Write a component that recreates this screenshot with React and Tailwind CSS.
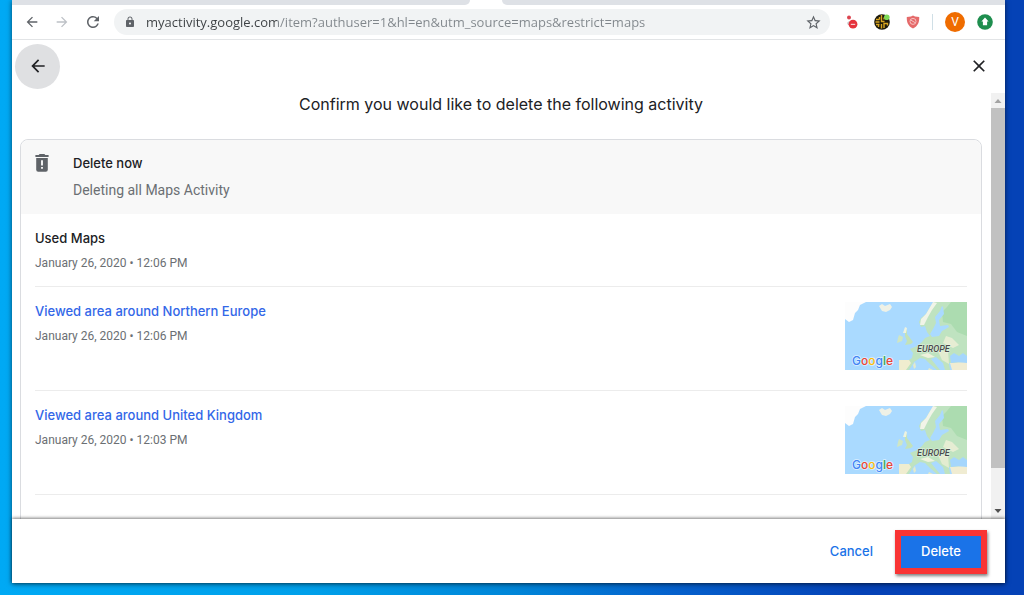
import React from 'react';
import { MdArrowBack, MdArrowForward, MdRefresh, MdLock, MdStarBorder, MdClose } from 'react-icons/md';

const activities = [
  { id: 1, title: 'Used Maps', time: 'January 26, 2020 • 12:06 PM' },
  { id: 2, title: 'Viewed area around Northern Europe', time: 'January 26, 2020 • 12:06 PM', map: true },
  { id: 3, title: 'Viewed area around United Kingdom', time: 'January 26, 2020 • 12:03 PM', map: true },
];

function BlockedDotIcon() {
  return (
    <svg width="12" height="14" viewBox="0 0 12 14" aria-hidden="true">
      <circle cx="3" cy="2.5" r="2" fill="#dc4550" />
      <path d="M1 8 Q2.5 5.5 4.5 6.5 L4 10 L2 10 Z" fill="#c9ccd0" />
      <circle cx="7" cy="9.2" r="4.4" fill="#e5323c" />
      <path d="M4.8 9.4 H9.2" stroke="#f6c5c8" strokeWidth="1.2" />
    </svg>
  );
}

function MazeIcon() {
  return (
    <svg width="16" height="16" viewBox="0 0 16 16" aria-hidden="true">
      <circle cx="8" cy="8" r="7.8" fill="#1d1a0c" />
      <path
        d="M2 5.5h3.5M1.5 8h4M2 10.5h3.5M7.5 1v6.5h3M7.5 14.5V10M5.5 3v2.5M4.5 13v-2.5M10 14v-4.5h3.5v2M10 3.5v2"
        stroke="#d9a520"
        strokeWidth="1.4"
        fill="none"
      />
      <circle cx="12.8" cy="3.2" r="2.8" fill="#7ed957" />
    </svg>
  );
}

function ShieldIcon() {
  return (
    <svg width="14" height="14" viewBox="0 0 14 14" aria-hidden="true">
      <path d="M7 0.5 L9 1.6 L13.2 2 C13.5 7 12 11 7 13.6 C2 11 .5 7 .8 2 L5 1.6 Z" fill="#e56a6a" />
      <circle cx="7" cy="6.4" r="3" fill="none" stroke="#f8c9c9" strokeWidth="0.9" />
      <path d="M5 5.2 L9 7.6" stroke="#f8c9c9" strokeWidth="0.9" />
    </svg>
  );
}

function UpdateIcon() {
  return (
    <svg width="16" height="16" viewBox="0 0 16 16" aria-hidden="true">
      <circle cx="8" cy="8" r="7.8" fill="#1e8e4e" />
      <path d="M8 3.6 L11.6 7.6 H10.1 V11.3 H5.9 V7.6 H4.4 Z" fill="#fff" />
    </svg>
  );
}

function DeleteAlertIcon() {
  return (
    <svg width="14" height="18" viewBox="0 0 14 18" aria-hidden="true">
      <path d="M4.6 0 H9.4 L10.3 1 H13.6 V3 H0.4 V1 H3.7 Z" fill="#5f6368" />
      <path d="M1.2 4 H12.8 V15.8 Q12.8 17.8 10.8 17.8 H3.2 Q1.2 17.8 1.2 15.8 Z" fill="#5f6368" />
      <path d="M6.1 6.2 H7.9 V11.4 H6.1 Z M6.1 13 H7.9 V14.8 H6.1 Z" fill="#fff" />
    </svg>
  );
}

function MapThumbnail() {
  return (
    <svg className="shrink-0" width="122" height="68" viewBox="0 0 122 68" role="img" aria-label="Map of Europe">
      <rect width="122" height="68" fill="#aadaff" />
      {/* Greenland and Iceland */}
      <path d="M0 0 H21 L15 3 L13 8 L10 11 L8 18 L4 20 L0 17 Z" fill="#fdfdfd" />
      <path d="M34 4 L37 2 L40 4 L45 2 L47 5 L45 8 L41 10 L37 9 Z" fill="#eff1e6" />
      {/* mainland, with the Baltic cut out below */}
      <path
        d="M122 0 H89 L85 5 L81 12 L76 16 L74 20 L76 25 L80 24 L82 30 L85 34 L80 36 L77 40 L72 44 L65 47 L68 51 L67 56 L64 58 L55 58 L54 68 H64 L69 60 L75 56 L80 57 L85 62 L92 68 H95 L86 57 L91 55 L98 61 L100 68 H105 L104 61 L122 60 Z"
        fill="#bfe3c0"
      />
      <path d="M106 0 H122 V34 L112 30 L106 22 L98 20 L97 10 L102 5 Z" fill="#acdcb0" />
      <path d="M88 0 L92 1 L87 8 L83 15 L79 23 L75 23 L76 17 L81 12 Z" fill="#f1f4e8" />
      <path d="M97 4 L95 9 L90 15 L91 21 L88 27 L85 32 L87 35 L94 34 L97 29 L104 25 L103 23 L95 24 L94 18 L99 12 L98 5 Z" fill="#aadaff" />
      <path d="M101 34 L107 36 L114 43 L108 46 L98 41 Z" fill="#e6edd3" />
      <path d="M75 53 L83 51 L90 55 L83 56 Z" fill="#eef2dd" />
      <path d="M54 58 L64 58 L66 61 L61 68 H54 Z" fill="#f0edcf" />
      <path d="M93 49 L103 49 L104 62 L97 58 Z" fill="#e3ecd0" />
      {/* Britain and Ireland */}
      <path d="M60 26 L62 29 L62 32 L65 36 L68 40 L66 42 L60 43 L62 39 L60 34 Z" fill="#c3e2b9" />
      <path d="M60 25 L62 26 L61 31 L58 31 Z" fill="#eef3e0" />
      <path d="M54 33 L58 35 L57 39 L52 41 L53 36 Z" fill="#cfe6c4" />
      {/* Black Sea and Turkey */}
      <path d="M105 61 L122 60 V68 H107 Z" fill="#f0ecd2" />
      <path d="M105 54 L109 51 L114 54 L118 51 L122 54 V61 L113 60 L106 61 Z" fill="#a5d6fc" />
      <path d="M84 66 L88 68 H83 Z M70 60 L71 65 L69 67 L68 63 Z" fill="#e4eacb" />
      <text x="72" y="50" fontFamily="Roboto, sans-serif" fontSize="9" fontStyle="italic" fontWeight="500" fill="#4a4a4a" stroke="#fff" strokeWidth="1" strokeOpacity="0.5" paintOrder="stroke">
        EUROPE
      </text>
      <text x="7" y="63" fontFamily="Inter, sans-serif" fontSize="12" fontWeight="500" stroke="#fff" strokeWidth="1.5" strokeOpacity="0.6" paintOrder="stroke">
        <tspan fill="#4285f4">G</tspan>
        <tspan fill="#ea4335">o</tspan>
        <tspan fill="#fbbc05">o</tspan>
        <tspan fill="#4285f4">g</tspan>
        <tspan fill="#34a853">l</tspan>
        <tspan fill="#ea4335">e</tspan>
      </text>
    </svg>
  );
}

function BrowserToolbar() {
  return (
    <header>
      <div className="flex h-[5px]">
        <div className="w-[458px] rounded-br-lg bg-[#dee1e6]" />
        <div className="w-8" />
        <div className="flex-1 rounded-bl-lg bg-[#dee1e6]" />
      </div>
      <div className="flex h-[35px] items-center border-b border-[#e2e4e6] px-3 text-[#5f6368]">
        <button type="button" aria-label="Back" className="mr-3.5">
          <MdArrowBack size={16} />
        </button>
        <button type="button" aria-label="Forward" className="mr-3.5 text-[#bdc1c6]">
          <MdArrowForward size={16} />
        </button>
        <button type="button" aria-label="Reload" className="mr-3">
          <MdRefresh size={18} />
        </button>
        <div className="flex h-[26px] flex-1 items-center rounded-full bg-[#f1f3f4] pr-2 pl-2.5">
          <MdLock size={12} className="mr-2.5 shrink-0" />
          <input
            type="text"
            aria-label="Address"
            readOnly
            value="myactivity.google.com/item?authuser=1&hl=en&utm_source=maps&restrict=maps"
            className="min-w-0 flex-1 bg-[linear-gradient(90deg,#3c4043_131px,#80868b_131px)] bg-clip-text pt-0.5 font-['Open_Sans',sans-serif] text-[13px] text-transparent outline-none"
          />
          <button type="button" aria-label="Bookmark this page">
            <MdStarBorder size={17} />
          </button>
        </div>
        <div className="ml-4 flex items-center gap-4">
          <BlockedDotIcon />
          <MazeIcon />
          <ShieldIcon />
        </div>
        <div className="mx-3 h-4 w-px bg-[#d0dfe6]" />
        <button type="button" className="mr-3 size-5 rounded-full bg-[#ef6c00] font-[Roboto,sans-serif] text-xs leading-5 text-white">
          V
        </button>
        <UpdateIcon />
      </div>
    </header>
  );
}

function ActivityRow({ item }) {
  return (
    <li className="flex justify-between border-b border-[#ececec] py-[15px] last:mb-12">
      <div>
        {item.map ? (
          <a href="#" className="block text-[13px] leading-[18px] font-medium text-[#3367e8]">{item.title}</a>
        ) : (
          <h3 className="text-[13px] leading-[18px] font-medium text-[#202124]">{item.title}</h3>
        )}
        <p className="mt-2 font-[Roboto,sans-serif] text-xs leading-4 text-[#6b6f73]">{item.time}</p>
      </div>
      {item.map && (
        <div className="pb-[5px]">
          <MapThumbnail />
        </div>
      )}
    </li>
  );
}

function Scrollbar() {
  return (
    <div className="flex w-3.5 shrink-0 flex-col items-center bg-[#f1f1f1]" aria-hidden="true">
      <svg width="14" height="15" viewBox="0 0 14 15">
        <path d="M3.5 10 L7 6 L10.5 10 Z" fill="#a3a3a3" />
      </svg>
      <div className="w-3.5 flex-[360] bg-[#c1c1c1]" />
      <div className="flex-[36]" />
      <svg width="14" height="15" viewBox="0 0 14 15">
        <path d="M3.5 5 L7 9 L10.5 5 Z" fill="#505050" />
      </svg>
    </div>
  );
}

export default function App() {
  return (
    <div className="h-screen overflow-hidden bg-[linear-gradient(90deg,#00a9f4_0%,#00a0ea_30%,#0086d8_50%,#0560cc_66%,#0542b6_84%)] pr-[19px] pb-3 pl-3 font-[Inter,sans-serif]">
      <div className="flex h-full flex-col bg-white shadow-[0_1px_5px_rgba(0,0,0,0.6)]">
        <BrowserToolbar />

        <div className="flex h-[53px] shrink-0 items-center justify-between pr-4 pb-px pl-[3px] text-[#202124]">
          <button type="button" aria-label="Go back" className="flex size-[45px] items-center justify-center rounded-full bg-[#dfe0e2]">
            <MdArrowBack size={20} />
          </button>
          <button type="button" aria-label="Close">
            <MdClose size={20} />
          </button>
        </div>

        <main className="flex min-h-0 flex-1">
          <div className="min-w-0 flex-1 overflow-hidden pr-[9px] pl-2">
            <h1 className="mb-6 text-center text-base leading-[22px] text-[#202124]">
              Confirm you would like to delete the following activity
            </h1>
            <section className="rounded-lg border border-[#dadce0]">
              <div className="flex gap-6 rounded-t-lg bg-[#f8f8f8] px-3.5 py-3.5">
                <DeleteAlertIcon />
                <div>
                  <h2 className="text-[13px] leading-[18px] font-medium text-[#202124]">Delete now</h2>
                  <p className="mt-2 font-[Roboto,sans-serif] text-sm leading-5 text-[#6b6f73]">Deleting all Maps Activity</p>
                </div>
              </div>
              <ul className="px-3.5">
                {activities.map((item) => (
                  <ActivityRow key={item.id} item={item} />
                ))}
              </ul>
            </section>
          </div>
          <Scrollbar />
        </main>

        <footer className="relative flex h-16 shrink-0 items-center justify-end gap-[22px] bg-white pt-0.5 pr-[18px] text-[13px] font-medium shadow-[0_-1px_3px_rgba(0,0,0,0.5)]">
          <button type="button" className="text-[#1a73e8]">Cancel</button>
          <div className="border-[6px] border-[#f93434] shadow-[1px_2px_3px_rgba(0,0,0,0.5)]">
            <button type="button" className="block h-8 w-20 bg-[#1a73e8] text-white">Delete</button>
          </div>
        </footer>
      </div>
    </div>
  );
}
